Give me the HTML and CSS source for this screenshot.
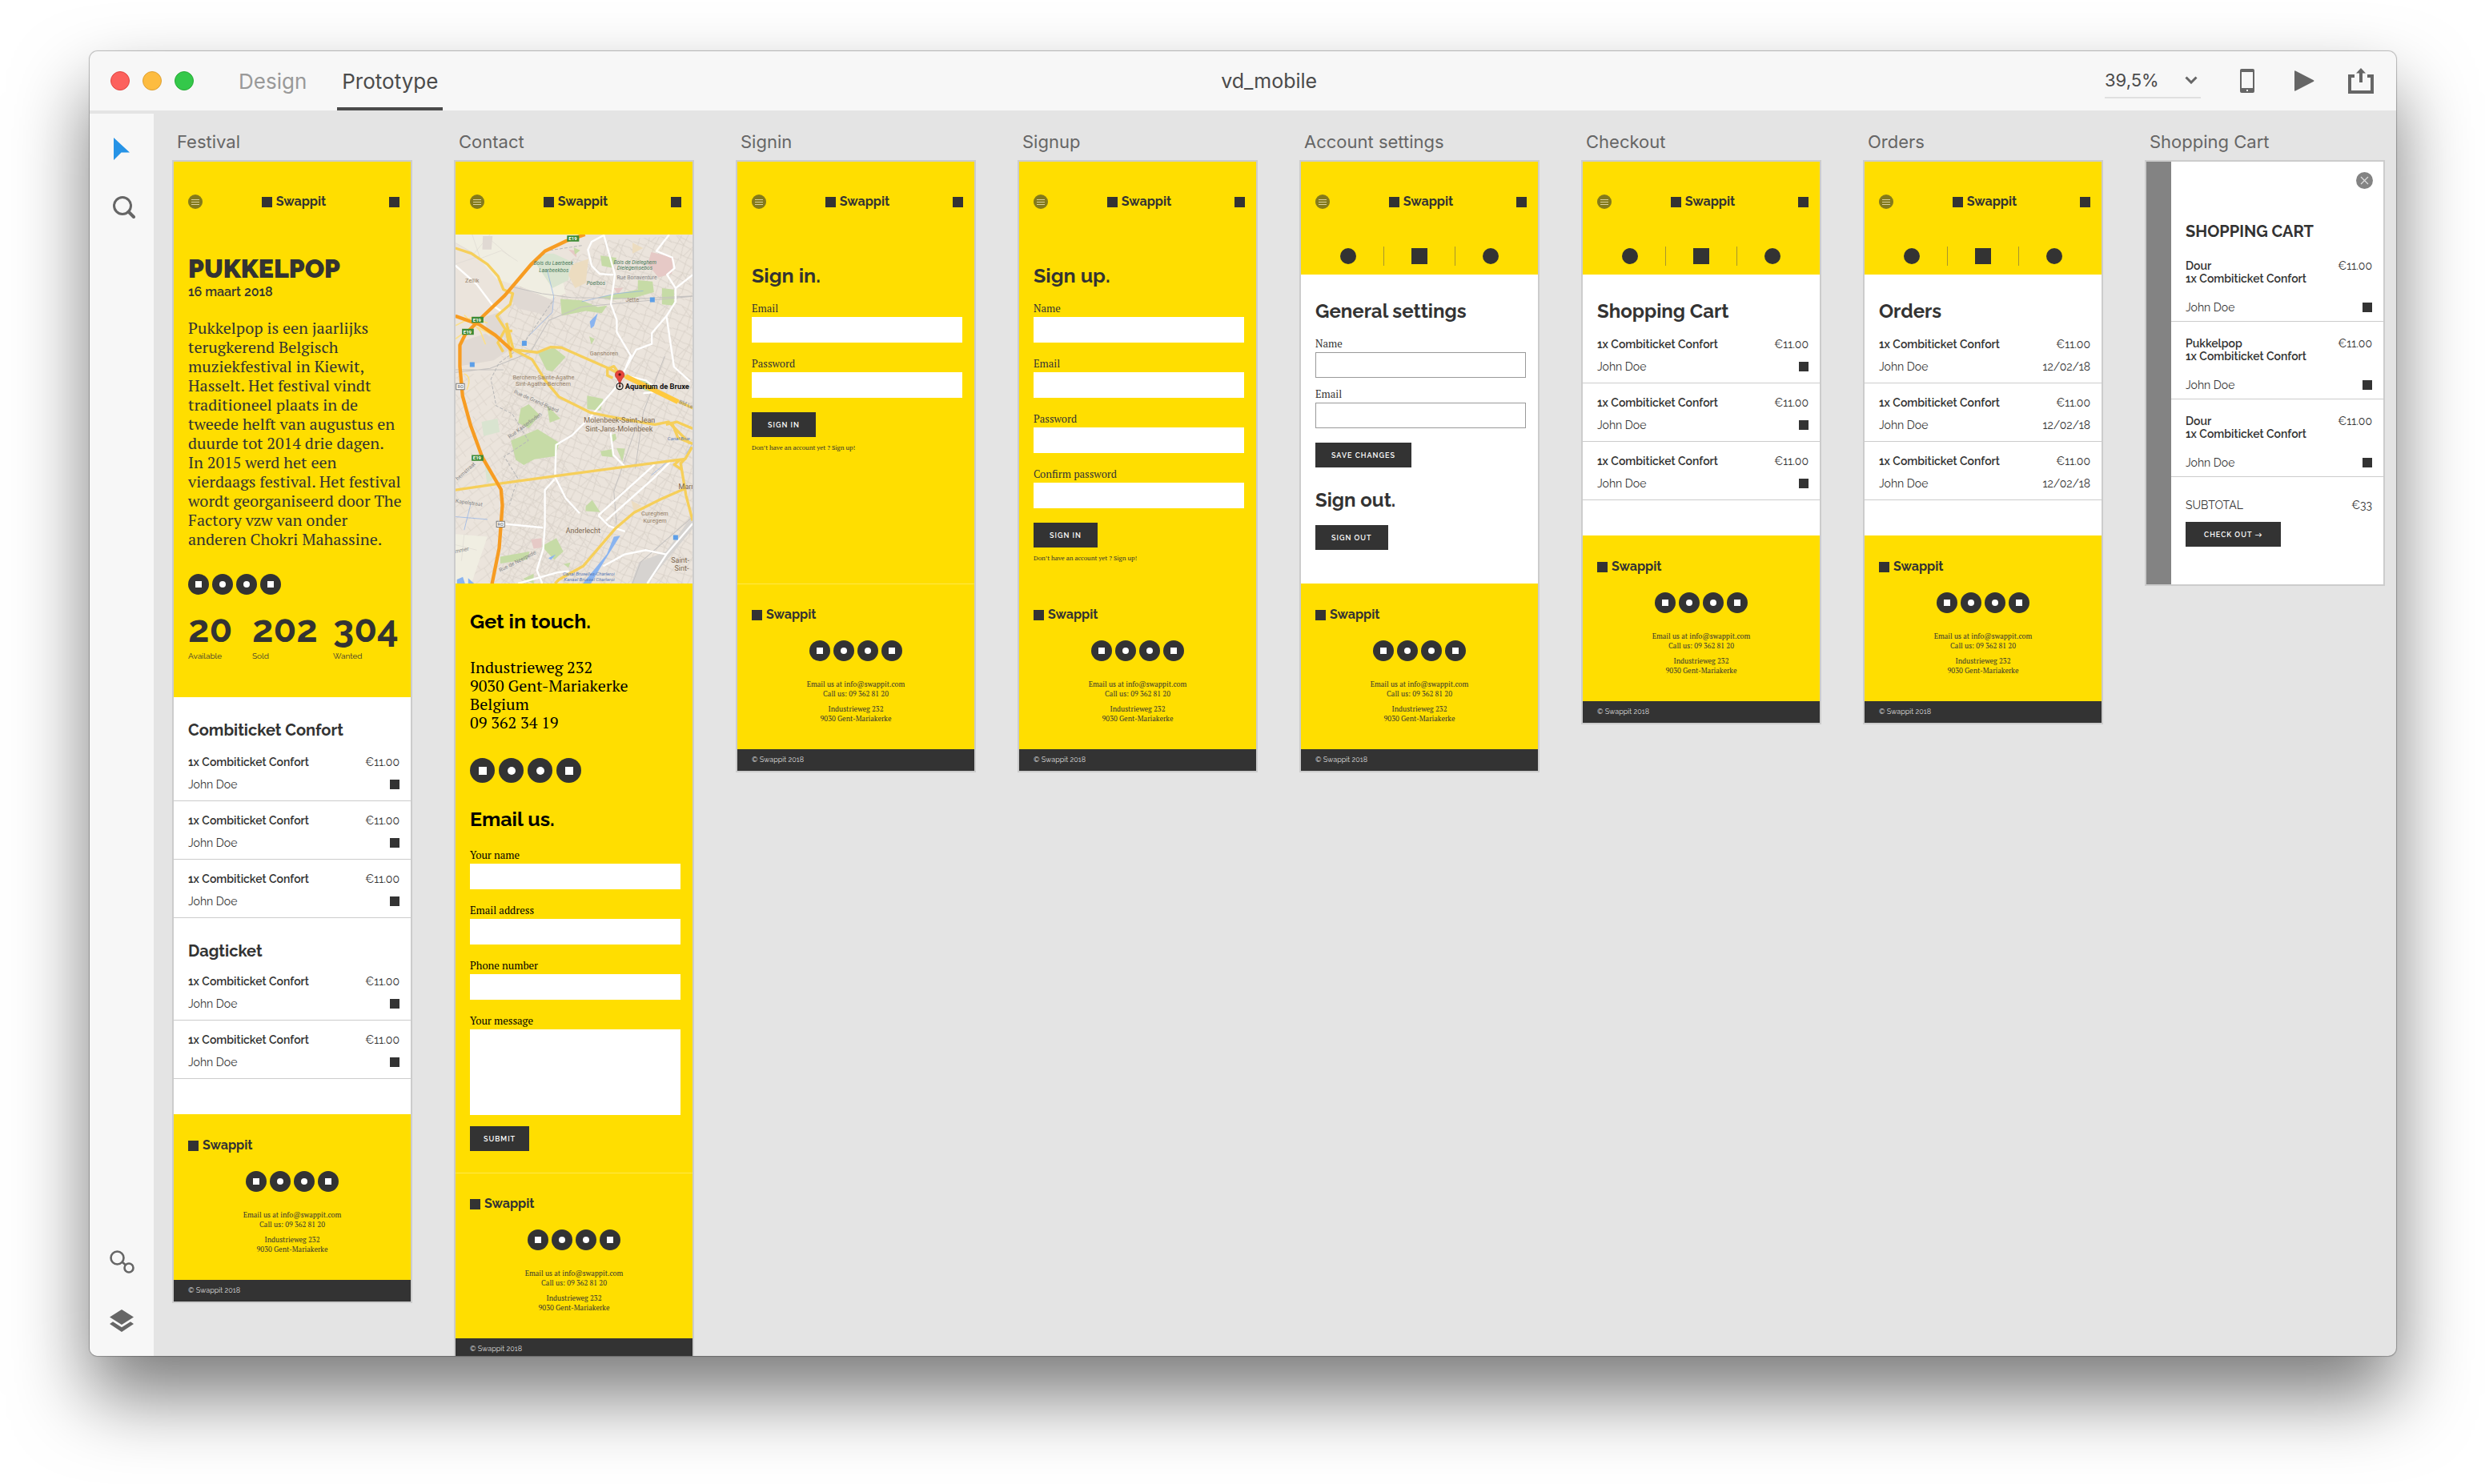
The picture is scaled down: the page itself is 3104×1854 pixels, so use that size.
FILE: index.html
```html
<!DOCTYPE html>
<html lang="en">
<head>
<meta charset="utf-8">
<title>vd_mobile</title>
<link rel="stylesheet" href="styles.css">
</head>
<body>
<div class="window">
  <header class="toolbar">
    <div class="lights"><span class="light close"></span><span class="light minimise"></span><span class="light expand"></span></div>
    <nav class="modes">
      <button class="mode" type="button">Design</button>
      <button class="mode active" type="button">Prototype</button>
    </nav>
    <h1 class="file-name">vd_mobile</h1>
    <div class="tools">
      <div class="zoom">
        <select class="zoom-level" aria-label="Zoom level"><option>39,5%</option></select>
        <svg class="chevron" viewBox="0 0 16 10"><path d="M1.5 1.5 8 8l6.500-6.500" fill="none" stroke="#666" stroke-width="3"/></svg>
      </div>
      <button class="tool" type="button" aria-label="Device preview"><svg width="18" height="30" viewBox="0 0 18 30"><path fill="#666" fill-rule="evenodd" d="M2 0h14a2 2 0 0 1 2 2v26a2 2 0 0 1-2 2H2a2 2 0 0 1-2-2V2a2 2 0 0 1 2-2zm0 4v20h14V4zm6 22v2h2v-2z"/></svg></button>
      <button class="tool" type="button" aria-label="Play"><svg width="25" height="26" viewBox="0 0 25 26"><path fill="#666" d="M0 1.200Q0 0 1.200.5L24 12.200q1 .8 0 1.600L1.200 25.500Q0 26 0 24.800z"/></svg></button>
      <button class="tool" type="button" aria-label="Share"><svg width="32" height="32" viewBox="0 0 32 32"><path fill="none" stroke="#666" stroke-width="4" d="M8 10H2v20h28V10h-6"/><path fill="none" stroke="#666" stroke-width="4" d="M16 18V4"/><path fill="#666" d="M10 6.500 16 0l6 6.500z"/></svg></button>
    </div>
  </header>

  <div class="workspace">
    <aside class="sidebar">
      <div class="side-group">
        <button class="side-tool" type="button" aria-label="Select"><svg width="20" height="28" viewBox="0 0 20 28"><path fill="#2693e6" d="M0 0 20 18.500H9.500L0 28z"/></svg></button>
        <button class="side-tool" type="button" aria-label="Zoom"><svg width="34" height="28" viewBox="-6 0 34 28"><circle cx="12" cy="12" r="10.500" fill="none" stroke="#666" stroke-width="3"/><path d="m19.500 19.500 6.500 6.500" stroke="#666" stroke-width="4" stroke-linecap="round"/></svg></button>
      </div>
      <div class="side-group">
        <button class="side-tool" type="button" aria-label="Symbols"><svg width="31" height="29" viewBox="0 0 31 29"><g fill="none" stroke="#666" stroke-width="2.600"><circle cx="9.500" cy="9.500" r="8"/><circle cx="24" cy="22" r="5.500"/><path d="m15.500 14.500 4.500 4"/></g></svg></button>
        <button class="side-tool" type="button" aria-label="Layers"><svg width="30" height="28" viewBox="0 0 30 28"><path fill="#666" d="m15 0 15 9.500L15 19 0 9.500zM0 18l4-2.700 11 7 11-7 4 2.700-15 10z"/></svg></button>
      </div>
    </aside>

    <main class="canvas">

      <section class="artboard">
        <h2 class="board-label">Festival</h2>
        <div class="board">
          <header class="app-bar"><button class="menu" type="button" aria-label="Menu"><i></i><i></i><i></i></button><a class="logo" href="#">Swappit</a><button class="cart-icon" type="button" aria-label="Cart"></button></header>
          <div class="hero">
            <h3 class="festival-name">PUKKELPOP</h3>
            <p class="festival-date">16 maart 2018</p>
            <p class="story">Pukkelpop is een jaarlijks<br>terugkerend Belgisch<br>muziekfestival in Kiewit,<br>Hasselt. Het festival vindt<br>traditioneel plaats in de<br>tweede helft van augustus en<br>duurde tot 2014 drie dagen.<br>In 2015 werd het een<br>vierdaags festival. Het festival<br>wordt georganiseerd door The<br>Factory vzw van onder<br>anderen Chokri Mahassine.</p>
            <div class="social"><i class="sq"></i><i></i><i></i><i class="sq"></i></div>
            <dl class="stats">
              <div><dd>20</dd><dt>Available</dt></div>
              <div><dd>202</dd><dt>Sold</dt></div>
              <div><dd>304</dd><dt>Wanted</dt></div>
            </dl>
          </div>
          <div class="listing">
            <h4 class="group-title">Combiticket Confort</h4>
            <ul class="tickets">
              <li><b>1x Combiticket Confort</b><span class="price">€11.00</span><span>John Doe</span><i class="mark"></i></li>
              <li><b>1x Combiticket Confort</b><span class="price">€11.00</span><span>John Doe</span><i class="mark"></i></li>
              <li><b>1x Combiticket Confort</b><span class="price">€11.00</span><span>John Doe</span><i class="mark"></i></li>
            </ul>
            <h4 class="group-title">Dagticket</h4>
            <ul class="tickets">
              <li><b>1x Combiticket Confort</b><span class="price">€11.00</span><span>John Doe</span><i class="mark"></i></li>
              <li><b>1x Combiticket Confort</b><span class="price">€11.00</span><span>John Doe</span><i class="mark"></i></li>
            </ul>
          </div>
          <footer class="app-footer">
            <a class="logo" href="#">Swappit</a>
            <div class="social"><i class="sq"></i><i></i><i></i><i class="sq"></i></div>
            <p>Email us at info@swappit.com<br>Call us: 09 362 81 20</p>
            <p>Industrieweg 232<br>9030 Gent-Mariakerke</p>
          </footer>
          <p class="copyright">© Swappit 2018</p>
        </div>
      </section>

      <section class="artboard">
        <h2 class="board-label">Contact</h2>
        <div class="board">
          <header class="app-bar"><button class="menu" type="button" aria-label="Menu"><i></i><i></i><i></i></button><a class="logo" href="#">Swappit</a><button class="cart-icon" type="button" aria-label="Cart"></button></header>
          <svg class="map" viewBox="27 39 888 1306" preserveAspectRatio="xMidYMid slice" role="img" aria-label="Map of Brussels">
            <defs>
              <pattern id="streets" width="132" height="118" patternUnits="userSpaceOnUse" patternTransform="rotate(24)">
                <path d="M0 14 50 8l82 10M0 42l60 6 72-8M0 74l44-6 88 8M0 100l70 6 62-8M18 0l6 44-8 74M48 0l-4 70 10 48M78 0l6 52-6 66M108 0l-8 40 12 78M0 42l48 26M84 48l48 28M60 106l24-58" fill="none" stroke="#d3cbc2" stroke-width="2"/>
              </pattern>
              <pattern id="lanes" width="90" height="104" patternUnits="userSpaceOnUse" patternTransform="rotate(-38)">
                <path d="M0 20h90M0 52l40 6 50-6M0 84h90M20 0v52M62 20l-6 84M34 58l-8 46M80 0v20" fill="none" stroke="#d8d1c9" stroke-width="2"/>
              </pattern>
            </defs>
            <path fill="#ebe4dc" d="M27 39h888v1306H27z"/>
            <path fill="url(#streets)" d="M240 250 600 60 915 39v1306H200V480z"/>
            <path fill="url(#lanes)" d="M27 560h200l190 260 120 525H27z"/>
            <path fill="#f0eee2" d="M27 39h470L380 85l-140 140-60-20L100 110l-73-40zM240 220l90-90h80l30 130-60 20zM27 1160l120 10-60 175H27z"/>
            <path fill="none" stroke="#dedad2" stroke-width="2" d="M27 70l70 40 60-71M90 39l30 90 80-30 60 40M160 60l70 60M27 150l90-30M27 1200l80 20M60 1160l-10 100"/>
            <path fill="#e0d9d3" d="M250 230 390 285v60l-130-30-30-40zM130 350l60-20 40 80-60 40zM50 440l90-30 90 60-60 40-120 20zM130 45h36l-4 50h-34z"/>
            <path fill="#d9e4d0" d="M345 110h50l65 30-10 70-60 30-60-90zM125 740l60-12 8 50-60 15zM135 880l40 70-30 20z"/>
            <path fill="#ecdcc0" d="M465 150l60-20-10 90-40 20-25-50zM690 70l40 20-40 20zM685 1035l40 20-30 20z"/>
            <path fill="#e6c9c6" d="M760 105l85 20-8 60-50 15-40-50zM620 240l35-2-20 24zM310 1180l40-5v35l-30 5zM450 95l30 5v25z"/>
            <path fill="#c6dba6" d="M420 280l80 5 60 25 35-5-20 28-60-8-90 18zM570 118l60 8-15 38-40-8zM470 88l24 10-20 16zM560 275l150-30v-35l55 5 5 40-70 20-90 8zM800 240l45 5v60l-45-5zM335 480l60-18 45 35-50 55-22-6zM528 420l20 10-12 20zM520 642l60 12-10 45-50-8zM272 690l30-16 40 40-40 50-40-20zM370 678l50 50-40 15zM235 810l100-42 80 50-12 50-80 12-40 22-30-20zM515 1055l24-22 30 45-55-4zM570 850l45-8v30l-40-4zM630 838l32 2-10 50zM350 1205l55-30 26 50-34 32zM195 1245l110-20-10 30-100 15zM432 1272l26-6-8 20zM606 790l20-6 4 20-14 10zM280 1328l40-20v37zM660 560l95 30 10 38-30-6z"/>
            <path fill="#8ab4f0" d="M530 365l30-32-14 48-12 10zM375 1250l28-14-18 20zM33 1330l22-10 8 25H33zM75 1325l22 20H75zM620 1170l24-4-60 95-50 84h-30l90-110z"/>
            <path fill="#d6d3d0" d="M915 1090v50l-170 205h-60l30-80 100-40z"/>
            <path fill="none" stroke="#8aaee8" stroke-width="2" d="M370 170l25 100-5 60-60 60-30 30M500 290l130-30 100-10M85 1045l-25 100M27 1095l120 10M820 890l-60 50M890 860l25-40"/>
            <path fill="none" stroke="#c5c2c0" stroke-width="3" d="M240 235l110 25 110 15 260 4 195-10M27 555l130-15 150-60 70-120 120-50 420-40M700 915l30-210 80-210M630 1120l-10-120 90-260M27 545h180M690 1345l30-80 195-170"/>
            <path fill="none" stroke="#b8b8b8" stroke-width="3" stroke-dasharray="12 6" d="M500 80l-130 20-60 60M260 470l-70 50-30 60 20 100 60 30 60 100-90 60 50 80-30 100M390 290l-110 160"/>
            <g fill="none" stroke="#fff" stroke-width="7" stroke-linejoin="round">
              <path d="M582 39l42 150-15 110 22 60v45l52 88-18 45M582 42l-45 24-14 30 14 60 30 30 52 4M915 190l-64 50v50l-34 54-55 64v40l-58 22-40 70-40 75-90 105-70 70-60 36-4 120 40 80 52 56M817 344l28 190 60 54M827 39l-48 62 60 24 8 40-28 24 32 50M27 155l80 70 60 80 30 20M398 955l-36 40v130l-6 90-24 80 20 50M215 1122l140 14M562 1090l210-190M562 1090l40 40 60 20M590 1110l180-160 60-60M680 570l60 15 26 20v24l-36 4M915 1120l-98 115-72 110M262 1345l150-42 40-4M580 1280l80-44 80-16 76 16M608 780l10 84 44 44"/>
            </g>
            <g fill="none" stroke="#f6cf5a" stroke-width="10" stroke-linejoin="round">
              <path d="M27 90l60 20 60 40 40 45 20 50 35 15-10 40-50 44 36 56 18 100M240 400l-30 0-24 44 20 34M218 370l26 100 90 10 50-20 40 2 170 75 60 30 116 54 150 70M244 470l70 36 50 80 50 60 120 60 120 24 120 20 50-10 80 80M640 560l-20-28-24 10v24l20 10"/>
              <path d="M27 995l150-22 220-30 260-34 230-30 26-45M815 750l40-10 60 25M840 750l20 50 55 22M890 875l-20 20 20 120 25 95M870 880l-24 20 30 20M885 990l-90 40-100 50-70 60-60 70-60 70-90 50-15 15"/>
            </g>
            <path fill="none" stroke="#fbe08a" stroke-width="5" d="M27 380l60-30 60 20M60 340l60 60 20 50M27 430l70-50 80 40M60 560q30 10 10 60"/>
            <path fill="none" stroke="#ffc93e" stroke-width="18" d="M665 570 860 665"/>
            <path fill="none" stroke="#f79c22" stroke-width="13" stroke-linejoin="round" d="M512 39l-70 24-80 38-50 48-100 118-80 76-68 70-20 40v80l10 110 30 110 44 120 70 120 5 60-12 160-27 134M27 344l90 32 60 40 62 56"/>
            <g fill="#3c8a34"><path d="M445 43h45v22h-45zM88 347h44v22H88zM52 392h44v22H52zM88 864h44v22H88z"/></g>
            <g fill="#fff" stroke="#777" stroke-width="3"><path d="M30 597h31v22H30zM181 1112h30v22h-30z"/></g>
            <g fill="#5d9fe8"><path d="M276 437h18v18h-18zM81 517h18v18H81zM755 274h18v18h-18zM842 1164h18v18h-18z"/></g>
            <path fill="#e8453c" stroke="#b53029" stroke-width="2" d="M642 606q-2-18-10-28a17 17 0 1 1 20 0q-8 10-10 28z"/>
            <circle cx="642" cy="563" r="5" fill="#5a1410"/>
            <circle cx="642" cy="607" r="12" fill="none" stroke="#222" stroke-width="4"/><circle cx="642" cy="607" r="4" fill="#222"/>
            <g class="map-shield"><text x="451" y="61">E19</text><text x="93" y="365">E19</text><text x="57" y="410">E19</text><text x="93" y="882">E19</text></g>
            <g class="map-ring"><text x="35" y="615">R0</text><text x="185" y="1130">R0</text></g>
            <g class="map-park"><text x="320" y="154">Bois du Laerbeek</text><text x="340" y="179">Laarbeekbos</text><text x="619" y="150">Bois de Dieleghem</text><text x="632" y="170">Dielegemsebos</text><text x="518" y="229">Poelbos</text></g>
            <g class="map-water"><text x="821" y="810">Canal Brux</text><text x="429" y="1316">Canal Bruxelles-Charleroi</text><text x="433" y="1336">Kanaal Brussel Charleroi</text></g>
            <g class="map-street"><text x="631" y="206">Rue Bonaventure</text><text transform="translate(244 632) rotate(24)">Rue de Grand-Bigard</text><text transform="translate(230 803) rotate(-36)">Rue Kasterlinden</text><text transform="translate(36 960) rotate(-42)">hemstraat</text><text transform="translate(27 1042) rotate(8)">Kapelstraat</text><text transform="translate(27 1232) rotate(-12)">mmer</text><text transform="translate(195 1302) rotate(-27)">Rue de Neerpede</text><text transform="translate(862 670) rotate(22)">Bld Le</text></g>
            <g class="map-town"><text x="64" y="218">Zellik</text><text x="664" y="290">Jette</text><text x="530" y="490">Ganshoren</text><text x="242" y="580">Berchem-Sainte-Agathe</text><text x="252" y="606">Sint-Agatha-Berchem</text><text x="723" y="1090">Cureghem</text><text x="730" y="1118">Kuregem</text></g>
            <g class="map-city"><text x="508" y="743">Molenbeek-Saint-Jean</text><text x="514" y="775">Sint-Jans-Molenbeek</text><text x="440" y="1156">Anderlecht</text><text x="862" y="992">Marn</text><text x="834" y="1266">Saint-</text><text x="847" y="1298">Sint-</text></g>
            <text class="map-place" x="662" y="616">Aquarium de Bruxe</text>
          </svg>
          <div class="contact">
            <h3 class="title big">Get in touch.</h3>
            <address class="address">Industrieweg 232<br>9030 Gent-Mariakerke<br>Belgium<br>09 362 34 19</address>
            <div class="social large"><i class="sq"></i><i></i><i></i><i class="sq"></i></div>
            <h3 class="title big">Email us.</h3>
            <form class="form">
              <label class="field">Your name<input type="text"></label>
              <label class="field">Email address<input type="email"></label>
              <label class="field">Phone number<input type="tel"></label>
              <label class="field">Your message<textarea></textarea></label>
              <button class="btn tight" type="button">SUBMIT</button>
            </form>
          </div>
          <footer class="app-footer ruled">
            <a class="logo" href="#">Swappit</a>
            <div class="social"><i class="sq"></i><i></i><i></i><i class="sq"></i></div>
            <p>Email us at info@swappit.com<br>Call us: 09 362 81 20</p>
            <p>Industrieweg 232<br>9030 Gent-Mariakerke</p>
          </footer>
          <p class="copyright">© Swappit 2018</p>
        </div>
      </section>

      <section class="artboard">
        <h2 class="board-label">Signin</h2>
        <div class="board">
          <header class="app-bar"><button class="menu" type="button" aria-label="Menu"><i></i><i></i><i></i></button><a class="logo" href="#">Swappit</a><button class="cart-icon" type="button" aria-label="Cart"></button></header>
          <div class="sign">
            <h3 class="title big">Sign in.</h3>
            <form class="form">
              <label class="field">Email<input type="email"></label>
              <label class="field">Password<input type="password"></label>
              <button class="btn" type="button">SIGN IN</button>
            </form>
            <p class="note">Don’t have an account yet ? <a href="#">Sign up!</a></p>
          </div>
          <footer class="app-footer ruled">
            <a class="logo" href="#">Swappit</a>
            <div class="social"><i class="sq"></i><i></i><i></i><i class="sq"></i></div>
            <p>Email us at info@swappit.com<br>Call us: 09 362 81 20</p>
            <p>Industrieweg 232<br>9030 Gent-Mariakerke</p>
          </footer>
          <p class="copyright">© Swappit 2018</p>
        </div>
      </section>

      <section class="artboard">
        <h2 class="board-label">Signup</h2>
        <div class="board">
          <header class="app-bar"><button class="menu" type="button" aria-label="Menu"><i></i><i></i><i></i></button><a class="logo" href="#">Swappit</a><button class="cart-icon" type="button" aria-label="Cart"></button></header>
          <div class="sign">
            <h3 class="title big">Sign up.</h3>
            <form class="form">
              <label class="field">Name<input type="text"></label>
              <label class="field">Email<input type="email"></label>
              <label class="field">Password<input type="password"></label>
              <label class="field">Confirm password<input type="password"></label>
              <button class="btn" type="button">SIGN IN</button>
            </form>
            <p class="note">Don’t have an account yet ? <a href="#">Sign up!</a></p>
          </div>
          <footer class="app-footer">
            <a class="logo" href="#">Swappit</a>
            <div class="social"><i class="sq"></i><i></i><i></i><i class="sq"></i></div>
            <p>Email us at info@swappit.com<br>Call us: 09 362 81 20</p>
            <p>Industrieweg 232<br>9030 Gent-Mariakerke</p>
          </footer>
          <p class="copyright">© Swappit 2018</p>
        </div>
      </section>

      <section class="artboard">
        <h2 class="board-label">Account settings</h2>
        <div class="board">
          <header class="app-bar"><button class="menu" type="button" aria-label="Menu"><i></i><i></i><i></i></button><a class="logo" href="#">Swappit</a><button class="cart-icon" type="button" aria-label="Cart"></button></header>
          <nav class="tabs"><a class="dot" href="#" aria-label="Account"></a><hr><a href="#" aria-label="Cart"></a><hr><a class="dot" href="#" aria-label="Orders"></a></nav>
          <div class="settings">
            <h3 class="title">General settings</h3>
            <form class="form outlined">
              <label class="field">Name<input type="text"></label>
              <label class="field">Email<input type="email"></label>
              <button class="btn" type="button">SAVE CHANGES</button>
            </form>
            <h3 class="title">Sign out.</h3>
            <button class="btn" type="button">SIGN OUT</button>
          </div>
          <footer class="app-footer">
            <a class="logo" href="#">Swappit</a>
            <div class="social"><i class="sq"></i><i></i><i></i><i class="sq"></i></div>
            <p>Email us at info@swappit.com<br>Call us: 09 362 81 20</p>
            <p>Industrieweg 232<br>9030 Gent-Mariakerke</p>
          </footer>
          <p class="copyright">© Swappit 2018</p>
        </div>
      </section>

      <section class="artboard">
        <h2 class="board-label">Checkout</h2>
        <div class="board">
          <header class="app-bar"><button class="menu" type="button" aria-label="Menu"><i></i><i></i><i></i></button><a class="logo" href="#">Swappit</a><button class="cart-icon" type="button" aria-label="Cart"></button></header>
          <nav class="tabs"><a class="dot" href="#" aria-label="Account"></a><hr><a href="#" aria-label="Cart"></a><hr><a class="dot" href="#" aria-label="Orders"></a></nav>
          <div class="listing">
            <h3 class="title page-title">Shopping Cart</h3>
            <ul class="tickets">
              <li><b>1x Combiticket Confort</b><span class="price">€11.00</span><span>John Doe</span><i class="mark"></i></li>
              <li><b>1x Combiticket Confort</b><span class="price">€11.00</span><span>John Doe</span><i class="mark"></i></li>
              <li><b>1x Combiticket Confort</b><span class="price">€11.00</span><span>John Doe</span><i class="mark"></i></li>
            </ul>
          </div>
          <footer class="app-footer">
            <a class="logo" href="#">Swappit</a>
            <div class="social"><i class="sq"></i><i></i><i></i><i class="sq"></i></div>
            <p>Email us at info@swappit.com<br>Call us: 09 362 81 20</p>
            <p>Industrieweg 232<br>9030 Gent-Mariakerke</p>
          </footer>
          <p class="copyright">© Swappit 2018</p>
        </div>
      </section>

      <section class="artboard">
        <h2 class="board-label">Orders</h2>
        <div class="board">
          <header class="app-bar"><button class="menu" type="button" aria-label="Menu"><i></i><i></i><i></i></button><a class="logo" href="#">Swappit</a><button class="cart-icon" type="button" aria-label="Cart"></button></header>
          <nav class="tabs"><a class="dot" href="#" aria-label="Account"></a><hr><a href="#" aria-label="Cart"></a><hr><a class="dot" href="#" aria-label="Orders"></a></nav>
          <div class="listing">
            <h3 class="title page-title">Orders</h3>
            <ul class="tickets">
              <li><b>1x Combiticket Confort</b><span class="price">€11.00</span><span>John Doe</span><span class="date">12/02/18</span></li>
              <li><b>1x Combiticket Confort</b><span class="price">€11.00</span><span>John Doe</span><span class="date">12/02/18</span></li>
              <li><b>1x Combiticket Confort</b><span class="price">€11.00</span><span>John Doe</span><span class="date">12/02/18</span></li>
            </ul>
          </div>
          <footer class="app-footer">
            <a class="logo" href="#">Swappit</a>
            <div class="social"><i class="sq"></i><i></i><i></i><i class="sq"></i></div>
            <p>Email us at info@swappit.com<br>Call us: 09 362 81 20</p>
            <p>Industrieweg 232<br>9030 Gent-Mariakerke</p>
          </footer>
          <p class="copyright">© Swappit 2018</p>
        </div>
      </section>

      <section class="artboard">
        <h2 class="board-label">Shopping Cart</h2>
        <div class="board drawer">
          <button class="dismiss" type="button" aria-label="Close"><svg width="21" height="21" viewBox="0 0 21 21"><circle cx="10.500" cy="10.500" r="10.500" fill="#838383"/><path d="m6 6 9 9m0-9-9 9" stroke="#ddd" stroke-width="1.200"/></svg></button>
          <h3 class="drawer-title">SHOPPING CART</h3>
          <ul class="tickets two-line">
            <li><b>Dour<br>1x Combiticket Confort</b><span class="price">€11.00</span><span>John Doe</span><i class="mark"></i></li>
            <li><b>Pukkelpop<br>1x Combiticket Confort</b><span class="price">€11.00</span><span>John Doe</span><i class="mark"></i></li>
            <li><b>Dour<br>1x Combiticket Confort</b><span class="price">€11.00</span><span>John Doe</span><i class="mark"></i></li>
          </ul>
          <p class="subtotal"><span>SUBTOTAL</span><span>€33</span></p>
          <button class="btn" type="button">CHECK OUT →</button>
        </div>
      </section>

    </main>
  </div>
</div>
</body>
</html>
```

FILE: styles.css
```css
:root {
  --yellow: #ffde00;
  --ink: #333;
  --chrome: #f7f7f7;
  --canvas: #e4e4e4;
  --sans: "Raleway", "Lato", sans-serif;
  --serif: "PT Serif", "Liberation Serif", serif;
  --ui: "Inter", sans-serif;
}

* { box-sizing: border-box; margin: 0; padding: 0; }

body {
  min-height: 100vh;
  padding: 64px 111px 160px 112px;
  background: #fff;
  color: var(--ink);
  font-family: var(--sans);
}

button, input, select, textarea {
  font: inherit;
  color: inherit;
  background: none;
  border: 0;
  border-radius: 0;
}
a { color: inherit; text-decoration: none; }
ul { list-style: none; }
svg { display: block; }

/* Application window */
.window {
  display: flex;
  flex-direction: column;
  height: calc(100vh - 224px);
  overflow: hidden;
  border-radius: 10px;
  background: var(--canvas);
  box-shadow: 0 0 1px 1px rgba(0, 0, 0, .25), 0 50px 94px rgba(0, 0, 0, .52);
}

.toolbar {
  display: flex;
  flex: none;
  height: 74px;
  align-items: stretch;
  padding: 0 28px 0 26px;
  background: var(--chrome);
  color: #4b4b4b;
  font-family: var(--ui);
  font-size: 25px;
}
.lights { display: flex; align-items: center; gap: 16px; }
.light { width: 24px; height: 24px; border-radius: 50%; border: 1px solid; }
.close { background: #fc615d; border-color: #e0443f; }
.minimise { background: #fdbc40; border-color: #dea033; }
.expand { background: #34c84a; border-color: #27aa35; }

.modes { display: flex; gap: 32px; margin-left: 50px; font-size: 26px; }
.mode { padding: 0 6px; border-bottom: 4px solid transparent; border-top: 4px solid transparent; color: #999; }
.mode.active { color: #4b4b4b; border-bottom-color: #4b4b4b; }

.file-name { flex: 1; align-self: center; text-align: center; font-size: 25px; font-weight: 400; }

.tools { display: flex; align-items: center; gap: 39px; padding-left: 12px; }
.zoom {
  display: flex;
  align-items: center;
  justify-content: space-between;
  width: 120px;
  height: 44px;
  margin-right: 3px;
  padding-right: 4px;
  border-bottom: 2px solid #e0e0e0;
}
.zoom-level { appearance: none; width: 84px; font-size: 22px; }
.chevron { width: 16px; height: 10px; }
.tool { display: grid; place-items: center; width: 32px; }

.workspace { display: flex; flex: 1; min-height: 0; }
.sidebar {
  display: flex;
  flex: none;
  flex-direction: column;
  justify-content: space-between;
  width: 80px;
  padding: 30px 0;
  border-top: 4px solid var(--canvas);
  background: var(--chrome);
}
.side-group { display: flex; flex-direction: column; align-items: center; gap: 45px; }

/* Artboards */
.canvas {
  display: grid;
  flex: 1;
  grid-template-columns: repeat(8, minmax(0, 1fr));
  gap: 52px;
  align-items: start;
  min-width: 0;
  padding: 25px 14px 0 23px;
}
.board-label {
  padding-left: 6px;
  margin-bottom: 9px;
  color: #666;
  font: 400 22px/28px var(--ui);
  white-space: nowrap;
}
.board { border: 2px solid #ccc; background: #fff; }

.app-bar {
  display: grid;
  grid-template-columns: 1fr auto 1fr;
  align-items: center;
  height: 91px;
  padding: 9px 14px 0 18px;
  background: var(--yellow);
}
.menu {
  display: flex;
  flex-direction: column;
  align-items: center;
  justify-content: center;
  gap: 2px;
  width: 18px;
  height: 18px;
  border-radius: 50%;
  background: #847a1c;
}
.menu i { width: 10px; height: 1px; background: #d8cf9a; }
.logo { display: flex; align-items: center; gap: 5px; font-size: 16px; line-height: 20px; font-weight: 700; }
.logo::before { content: ""; width: 13px; height: 13px; background: var(--ink); }
.cart-icon { justify-self: end; width: 13px; height: 13px; background: var(--ink); }

.tabs {
  display: flex;
  align-items: center;
  justify-content: center;
  gap: 34px;
  height: 50px;
  padding-top: 4px;
  background: var(--yellow);
}
.tabs a { width: 20px; height: 20px; background: var(--ink); }
.tabs .dot { border-radius: 50%; }
.tabs hr { width: 1px; height: 24px; border: 0; background: #a8952c; }

.title { font-size: 24px; line-height: 32px; font-weight: 700; }
.title.big { font-size: 25px; }

.social { display: flex; gap: 4px; }
.social i {
  display: grid;
  place-items: center;
  width: 26px;
  height: 26px;
  border-radius: 50%;
  background: var(--ink);
}
.social i::before { content: ""; width: 8px; height: 8px; border-radius: 50%; background: #fff; }
.social .sq::before { border-radius: 0; }
.social.large { gap: 5px; }
.social.large i { width: 31px; height: 31px; }
.social.large i::before { width: 10px; height: 10px; }

/* Festival */
.hero { padding: 27px 10px 44px 18px; background: var(--yellow); }
.festival-name { font-size: 32px; line-height: 32px; font-weight: 900; }
.festival-date { margin-top: 3px; font-size: 16px; line-height: 20px; font-weight: 600; }
.story { margin-top: 23px; font: 20px/24px var(--serif); white-space: nowrap; }
.hero .social { margin-top: 31px; }
.stats { display: grid; grid-template-columns: 80px 101px 1fr; margin-top: 23px; }
.stats dd { font-size: 47px; line-height: 40px; font-weight: 700; }
.stats dt { margin-top: 7px; font-size: 10px; line-height: 14px; }

.listing { padding-bottom: 44px; }
.group-title { padding: 29px 18px 2px; font-size: 20px; line-height: 24px; font-weight: 700; }
.group-title:first-child { padding-bottom: 4px; }
.page-title { padding: 30px 18px 1px; }

.tickets { font-size: 14px; line-height: 20px; }
.tickets li {
  display: grid;
  grid-template-columns: 1fr auto;
  row-gap: 8px;
  padding: 14px 14px 10px 18px;
  border-bottom: 1px solid #ccc;
}
.tickets b { font-weight: 600; }
.price, .date { text-align: right; }
.mark { justify-self: end; align-self: center; width: 12px; height: 12px; background: var(--ink); }

/* Forms */
.contact { padding: 31px 15px 27px 18px; background: var(--yellow); color: #000; }
.address { margin-top: 30px; font: 20px/23px var(--serif); }
.contact .social { margin: 33px 0 29px; }
.contact .form { margin-top: 21px; }

.form { display: flex; flex-direction: column; align-items: flex-start; gap: 18px; }
.field { display: flex; flex-direction: column; gap: 3px; width: 100%; font: 13px/16px var(--serif); }
.field input { width: 100%; height: 32px; padding: 0 8px; background: #fff; }
.field textarea { width: 100%; height: 107px; padding: 8px; background: #fff; resize: none; }
.outlined .field input { border: 1px solid #999; }
.outlined .field + .field { margin-top: -6px; }

.btn {
  height: 31px;
  padding: 0 20px;
  background: var(--ink);
  color: #fff;
  font-size: 9px;
  font-weight: 600;
  letter-spacing: 1px;
}
.btn.tight { padding: 0 17px; margin-top: -4px; }

.sign { min-height: 436px; padding: 35px 15px 0 18px; background: var(--yellow); }
.sign .form { margin-top: 17px; }
.note { margin-top: 6px; font: 8px/14px var(--serif); }

.settings { padding: 30px 15px 42px 18px; }
.settings .form { margin: 16px 0 25px; }
.settings > .btn { margin-top: 15px; }

/* Footer */
.app-footer { padding: 29px 18px 32px; background: var(--yellow); }
.app-footer.ruled { padding-top: 28px; border-top: 1px solid #ffe84d; }
.app-footer .social { justify-content: center; margin: 22px 0 23px; }
.app-footer p { font: 9px/12px var(--serif); text-align: center; }
.app-footer p + p { margin-top: 7px; }
.copyright { padding: 0 18px; background: var(--ink); color: #ddd; font-size: 9px; line-height: 27px; }

/* Cart drawer */
.drawer { padding: 13px 0 47px; background: linear-gradient(90deg, #838383 31px, #fff 31px); }
.dismiss { display: block; margin: 0 13px 0 auto; }
.drawer-title { margin: 39px 0 2px 49px; font-size: 20px; line-height: 28px; font-weight: 700; }
.two-line { margin-left: 31px; }
.two-line li { row-gap: 18px; padding: 19px 14px 7px 18px; }
.two-line b, .two-line b + .price { line-height: 16px; }
.subtotal { display: flex; justify-content: space-between; margin: 25px 14px 11px 49px; font-size: 14px; line-height: 20px; }
.drawer .btn { display: block; margin-left: 49px; padding: 0 23px; }

/* Map lettering */
.map { width: 100%; height: auto; aspect-ratio: 296 / 436; font-family: "Roboto", sans-serif; }
.map-shield { fill: #fff; font-size: 18px; font-weight: 700; }
.map-ring { fill: #555; font-size: 18px; }
.map-park { fill: #4a7a5a; font-size: 20px; font-style: italic; }
.map-water { fill: #5a7cb8; font-size: 18px; font-style: italic; }
.map-street { fill: #888; font-size: 20px; }
.map-town { fill: #957f68; font-size: 22px; }
.map-city { fill: #7d6850; font-size: 27px; }
.map-place { fill: #111; font-size: 28px; font-weight: 700; }
```
